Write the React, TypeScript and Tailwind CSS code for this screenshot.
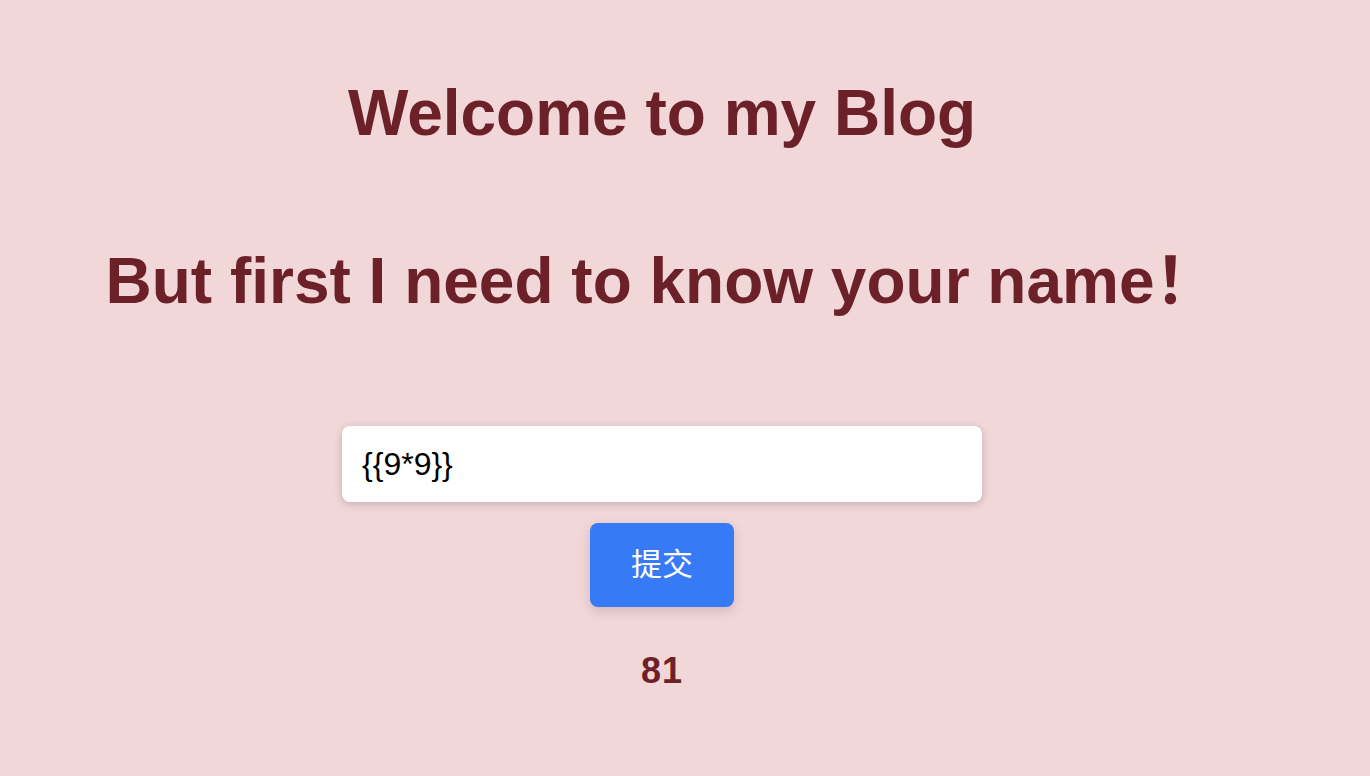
export default function App() {
  return (
    <div
      className="min-h-[776px] w-full bg-[#f2d7d9] text-[#6b2127]"
      style={{ fontFamily: '"Liberation Sans", Arial, "Noto Sans CJK SC", sans-serif' }}
    >
      <div className="flex w-[1324px] flex-col items-center">
        <h1 className="mt-[73px] text-[64px] font-bold leading-[80px]">Welcome to my Blog</h1>
        <h2 className="mt-[88px] text-[64px] font-bold leading-[80px]">But first I need to know your name！</h2>
        <input
          type="text"
          defaultValue="{{9*9}}"
          className="mt-[105px] h-[76px] w-[640px] rounded-lg bg-white px-5 text-[32px] text-black shadow-[0_2px_8px_rgba(0,0,0,0.2)] outline-none"
        />
        <button className="mt-[21px] h-[84px] w-[144px] rounded-lg bg-[#367af5] text-[31px] text-white shadow-[0_4px_12px_rgba(0,0,0,0.15)]">
          提交
        </button>
        <p className="mt-[37px] text-[36px] font-bold tracking-[1px]">81</p>
      </div>
    </div>
  );
}
